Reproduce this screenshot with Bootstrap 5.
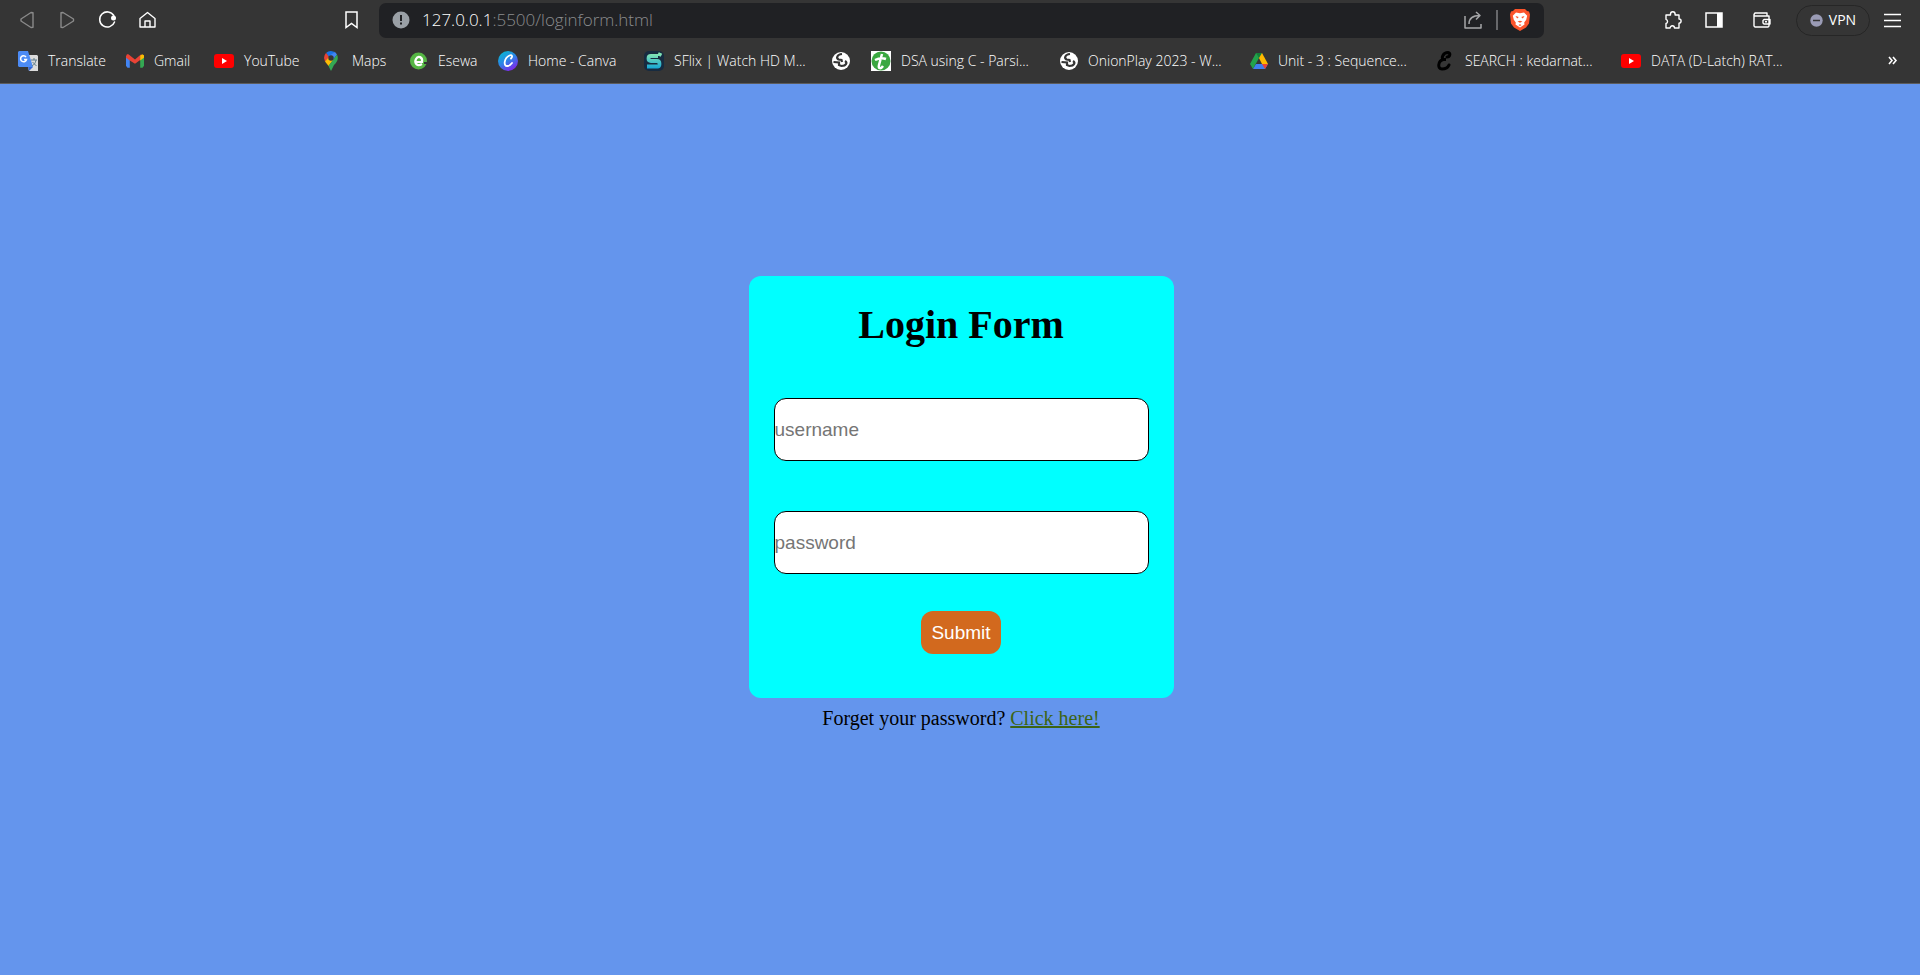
<!DOCTYPE html>
<html lang="en">
<head>
<meta charset="utf-8">
<meta name="viewport" content="width=device-width, initial-scale=1">
<title>Login Form</title>
<link href="https://cdn.jsdelivr.net/npm/bootstrap@5.3.0/dist/css/bootstrap.min.css" rel="stylesheet">
<style>
  body { background: #6495ed; color: #000; font-family: "Liberation Serif", "Times New Roman", serif; }
  .browser-bar { background: #353535; border-bottom: 1px solid #5c5c5c; color: #fff; padding-bottom: 1px; font-family: "Open Sans", sans-serif; font-weight: 300; }
  .browser-bar svg { display: block; flex: none; }
  .toolbar { height: 40px; padding-left: 18px; padding-right: 18px; }
  .tool-btn { border: 0; background: none; padding: 0; width: 20px; height: 20px; color: #fff; flex: none; }
  .nav-tools { gap: 20px; width: 361px; padding-right: 18px; }
  .url-box { height: 35px; background: #202124; border-radius: 7px; padding: 0 14px 0 13px; gap: 12px; }
  .url-field { font-size: 17px; line-height: 24px; color: #8b8c8e; }
  .url-field a { color: inherit; text-decoration: none; }
  .url-field span { color: #fff; }
  .url-rule { width: 2px; height: 20px; background: #67686b; }
  .side-tools { padding-left: 120px; gap: 20px; }
  .wallet-tools { gap: 24px; padding-left: 8px; }
  .vpn-tools { gap: 12px; }
  .vpn-btn { height: 31px; width: 74px; border: 1px solid #262626; border-radius: 16px; background: none; color: #fff; font-size: 14px; line-height: 20px; font-weight: 400; gap: 6px; padding: 0; }
  .bookmarks { height: 42px; padding: 0 18px; font-size: 14px; line-height: 20px; }
  .bookmark-list { display: grid; grid-template-columns: 108px 88px 110px 86px 88px 146px 188px 39px 189px 190px 187px 184px auto; align-items: center; }
  .bookmark-link { color: #fff; text-decoration: none; gap: 10px; white-space: nowrap; }
  .bookmark-link:hover { color: #fff; }
  .bookmark-icon { width: 20px; display: flex; justify-content: center; }
  .bookmark-icon-narrow { width: 18px; display: flex; }
  .login-area { padding-top: 192px; padding-left: 2px; }
  .login-panel { width: 425px; max-width: 100%; background: #0ff; border-radius: 12px; padding: 26px 25px 44px; }
  .login-title { font-size: 40px; line-height: 46px; font-weight: 700; margin-bottom: 50px; }
  .login-input, .login-input:focus { height: 63px; border: 1px solid #000; border-radius: 12px; padding: 0; background: #fff; color: #000; font-family: "Liberation Sans", Arial, sans-serif; font-size: 19px; line-height: 24px; }
  .login-input::placeholder { color: #757575; }
  .user-field { margin-bottom: 50px; }
  .submit-btn, .submit-btn:hover { background: #d2691e; color: #fff; border: 0; border-radius: 12px; margin-top: 37px; padding: 10px; font-family: "Liberation Sans", Arial, sans-serif; font-size: 19px; line-height: 23px; }
  .help-line { font-size: 20px; line-height: 24px; margin-top: 8px; }
  .help-line a { color: #3c6414; }
</style>
</head>
<body>
<header class="browser-bar">
  <div class="toolbar d-flex align-items-center">
    <div class="nav-tools d-flex align-items-center">
      <button class="tool-btn" aria-label="Back"><svg width="20" height="20" fill="none" stroke="#8a8a8a" stroke-width="1.4" stroke-linejoin="round"><path d="M15 2.800v14.400L13 17.500 3 11V9L13 2.500Z"/></svg></button>
      <button class="tool-btn" aria-label="Forward"><svg width="20" height="20" fill="none" stroke="#8a8a8a" stroke-width="1.4" stroke-linejoin="round"><path d="M3 2.800v14.400l2 .3L15.500 11V9L5 2.500Z"/></svg></button>
      <button class="tool-btn" aria-label="Reload"><svg width="20" height="20"><path d="M15.800 5.500A7.600 7.600 0 1 0 16.500 12" fill="none" stroke="#fff" stroke-width="1.500" stroke-linecap="round"/><circle cx="15.500" cy="8" r="2.500" fill="#fff"/></svg></button>
      <button class="tool-btn" aria-label="Home"><svg width="20" height="20" fill="none" stroke="#fff" stroke-width="1.400" stroke-linejoin="round"><path d="M2 8.500 9.500 2.500 17 8.500V17H2ZM7 17v-6h5v6"/></svg></button>
      <button class="tool-btn ms-auto" aria-label="Bookmark this page"><svg width="20" height="20" fill="none" stroke="#fff" stroke-width="1.500"><path d="M5 2h11v15.500L10.500 13.500 5 17.500Z"/></svg></button>
    </div>
    <div class="url-box d-flex align-items-center flex-grow-1">
      <svg width="18" height="18"><circle cx="9" cy="9" r="8.500" fill="#9aa0a6"/><path d="M9 4v6M9 11.500v2" stroke="#202124" stroke-width="2"/></svg>
      <div class="url-field flex-grow-1"><a href="#"><span>127.0.0.1</span>:5500/loginform.html</a></div>
      <button class="tool-btn" aria-label="Share"><svg width="20" height="20" fill="none" stroke="#a5a6a8" stroke-width="1.500" stroke-linejoin="round"><path d="M1 6v12h16v-4M5 14c0-5 3-8.500 11-8.500M12 2l4 3.500-4 4"/></svg></button>
      <div class="url-rule"></div>
      <button class="tool-btn d-flex align-items-center" aria-label="Shields"><svg width="20" height="22" viewBox="0 0 20 22"><path d="M5 0h10l2 2 2 .5 1 3-1 9-3 4-6 3.500-6-3.500-3-4-1-9 1-3L3 2Z" fill="#fb542b"/><path d="M6 3.500 10 4.200l4-.7 3.200 3.200-1 4-2 2.800.3 2-4.500 3-4.500-3 .3-2-2-2.800-1-4Z" fill="#fff"/><path d="m5.500 7 3.300 1-1.600 1.500ZM14.500 7l-3.300 1 1.600 1.500ZM7.500 12.500 10 11.700l2.500.8-2.500 1.300ZM8.500 16l1.500-.8 1.500.8-1.500 1Z" fill="#fb542b"/></svg></button>
    </div>
    <div class="side-tools d-flex align-items-center">
      <button class="tool-btn" aria-label="Extensions"><svg width="20" height="20" fill="none" stroke="#fff" stroke-width="1.400" stroke-linejoin="round"><path d="M2 5h4.500V4a2.300 2.300 0 0 1 4.600 0v1H15v4a2 2 0 0 1 0 4.200V18h-4.500a2.200 2.200 0 0 0-4.400 0H2v-4.500a2.200 2.200 0 0 0 0-4.200Z"/></svg></button>
      <button class="tool-btn" aria-label="Sidebar"><svg width="20" height="20"><path d="M2 3h16v14H2Z" fill="none" stroke="#fff" stroke-width="1.500"/><path d="M13 3h5v14h-5Z" fill="#fff"/></svg></button>
      <div class="wallet-tools d-flex align-items-center">
        <button class="tool-btn" aria-label="Wallet"><svg width="20" height="20" fill="none" stroke="#fff" stroke-width="1.400" stroke-linejoin="round"><path d="M15 6V3H3L2 4.500V16l1 1h13l1-1V6H2M18 9.500h-6l-1 1V13l1 1h6ZM13 11.800h2"/></svg></button>
        <div class="vpn-tools d-flex align-items-center">
          <button class="vpn-btn d-flex align-items-center justify-content-center"><svg width="13" height="13"><circle cx="6.500" cy="6.500" r="6.200" fill="#9a9bb5"/><path d="M3 6.500h7" stroke="#353535" stroke-width="1.500"/></svg>VPN</button>
          <button class="tool-btn" aria-label="Menu"><svg width="20" height="20"><path d="M2 4.500h17M2 10.500h17M2 16.500h17" stroke="#fff" stroke-width="1.400"/></svg></button>
        </div>
      </div>
    </div>
  </div>
  <nav class="bookmarks d-flex align-items-center justify-content-between" aria-label="Bookmarks">
    <div class="bookmark-list">
      <a class="bookmark-link d-flex align-items-center" href="#"><span class="bookmark-icon"><svg width="20" height="20"><path d="M7 4h12l1 1v15h-9Z" fill="#dcdcdc"/><path d="M1 0h9l5 16H1l-1-1V1Z" fill="#4c8bf5"/><path d="m10 16h5l-4 4Z" fill="#3367d6"/><path d="M8 6A3 3 0 1 0 8.500 8.500H6" fill="none" stroke="#fff" stroke-width="1.500"/><path d="M13 9h6M16 7v2M18 9c-.5 3-2 5-4 6M14.500 11l4 4" fill="none" stroke="#607d8b"/></svg></span>Translate</a>
      <a class="bookmark-link d-flex align-items-center" href="#"><span class="bookmark-icon-narrow"><svg width="18" height="14" viewBox="0 0 19 14"><path d="M0 2v10l1.500 2H4V5Z" fill="#4285f4"/><path d="M15 5v9h2.500L19 12V2Z" fill="#34a853"/><path d="m0 2 1-2h1.500L9.500 5.500 16 0 15 6 9.500 10 4 6.500 0 3.500Z" fill="#ea4335"/><path d="M15 1.500 17 0l2 1v2.500l-4 3Z" fill="#fbbc04"/></svg></span>Gmail</a>
      <a class="bookmark-link d-flex align-items-center" href="#"><span class="bookmark-icon"><svg width="20" height="14"><rect width="20" height="14" rx="3" fill="#f00"/><path d="m8 4 5 3-5 3Z" fill="#fff"/></svg></span>YouTube</a>
      <a class="bookmark-link d-flex align-items-center" href="#"><span class="bookmark-icon-narrow"><svg width="14" height="20"><path d="M7 0a7 7 0 0 0-5 2l4 5 5-6Z" fill="#1a73e8"/><path d="M2 2Q0 4 0 7l1 3.500L6 7Z" fill="#ea4335"/><path d="M1 10.500 4.500 15 10 8 5 6Z" fill="#fbbc04"/><path d="m11 1 2 2.500L9 9 5 5Z" fill="#4285f4"/><path d="M13 3.500C15 8 13 11 10 14L7 20 4.500 15Z" fill="#34a853"/><circle cx="7" cy="7" r="2.700" fill="#353535"/></svg></span>Maps</a>
      <a class="bookmark-link d-flex align-items-center" href="#"><span class="bookmark-icon-narrow"><svg width="18" height="20"><circle cx="8.500" cy="10" r="8.500" fill="#55b644"/><path d="M5 11h7c1-5-4-7-6-3s1 8 6 5" fill="none" stroke="#fff" stroke-width="2.200"/><path d="M14 11h4v2h-4Z" fill="#353535"/></svg></span>Esewa</a>
      <a class="bookmark-link d-flex align-items-center" href="#"><span class="bookmark-icon"><svg width="20" height="20"><defs><linearGradient id="canva" x2=".6" y2="1"><stop stop-color="#00c4cc"/><stop offset=".55" stop-color="#2c84e8"/><stop offset="1" stop-color="#7d2ae8"/></linearGradient></defs><circle cx="10" cy="10" r="10" fill="url(#canva)"/><path d="M13 7.500c2-2 1-4-1.500-3C6 7 5 15.500 9.500 15c2 0 3-1 4.500-3" fill="none" stroke="#fff" stroke-width="1.800" stroke-linecap="round"/></svg></span>Home - Canva</a>
      <a class="bookmark-link d-flex align-items-center" href="#"><span class="bookmark-icon"><svg width="20" height="20"><defs><linearGradient id="sflix" gradientUnits="userSpaceOnUse" x1="0" y1="2" x2="0" y2="18"><stop stop-color="#8be8b0"/><stop offset="1" stop-color="#11a5d8"/></linearGradient></defs><rect width="20" height="20" rx="5" fill="#172b40"/><path d="M14 5H7Q4.500 5 4.500 7.500T7 10h6q2.500 0 2.500 3T13 15.500H3M15 5l1.500-3" fill="none" stroke="url(#sflix)" stroke-width="3.800"/></svg></span>SFlix | Watch HD M...</a>
      <a class="bookmark-link d-flex align-items-center" href="#" aria-label="Website"><span class="bookmark-icon-narrow"><svg width="18" height="20"><circle cx="9" cy="10" r="9" fill="#fff"/><path d="M10 3C5 3.500 4 7 6.500 8.500l3 .5.500 2M1.500 11l5.500.5v2.500l2.500 1c5 0 6-3.500 3.500-5" fill="none" stroke="#353535" stroke-width="2.200"/></svg></span></a>
      <a class="bookmark-link d-flex align-items-center" href="#"><span class="bookmark-icon"><svg width="20" height="20"><path d="M0 0h20v20H0Z" fill="#fff"/><circle cx="10" cy="10" r="9.500" fill="#3aa840"/><path d="M11 3 8 14c-1 4 2 4 4 1M4 9q6-3 11-1" fill="none" stroke="#fff" stroke-width="2.500"/></svg></span>DSA using C - Parsi...</a>
      <a class="bookmark-link d-flex align-items-center" href="#"><span class="bookmark-icon-narrow"><svg width="18" height="20"><circle cx="9" cy="10" r="9" fill="#fff"/><path d="M10 3C5 3.500 4 7 6.500 8.500l3 .5.500 2M1.500 11l5.500.5v2.500l2.500 1c5 0 6-3.500 3.500-5" fill="none" stroke="#353535" stroke-width="2.200"/></svg></span>OnionPlay 2023 - W...</a>
      <a class="bookmark-link d-flex align-items-center" href="#"><span class="bookmark-icon-narrow"><svg width="18" height="16"><path d="M6 0h6L9 5 3 16 0 11Z" fill="#22a24b"/><path d="M6 0h6l-3 5Z" fill="#148038"/><path d="m12 0 6 11h-6L9 5Z" fill="#ffba00"/><path d="M6 11h12l-3 5H3Z" fill="#3f7fee"/><path d="M12 11h6l-3 5Z" fill="#ea4335"/></svg></span>Unit - 3 : Sequence...</a>
      <a class="bookmark-link d-flex align-items-center" href="#"><span class="bookmark-icon-narrow"><svg width="16" height="20"><path d="M10 6c3 0 4-4 1-4.500C6 1.500 4 7 6.500 8.500H9 6.500C1 9.500 0 18 5 18c4 0 6-1.500 7-4" fill="none" stroke="#000" stroke-width="3" stroke-linecap="round"/></svg></span>SEARCH : kedarnat...</a>
      <a class="bookmark-link d-flex align-items-center" href="#"><span class="bookmark-icon"><svg width="20" height="14"><rect width="20" height="14" rx="3" fill="#f00"/><path d="m8 4 5 3-5 3Z" fill="#fff"/></svg></span>DATA (D-Latch) RAT...</a>
    </div>
    <button class="tool-btn" aria-label="More bookmarks"><svg width="20" height="20" fill="none" stroke="#fff" stroke-width="1.600"><path d="m7 6 3 3.500L7 13M11 6l3 3.500-3 3.500"/></svg></button>
  </nav>
</header>
<main class="login-area d-flex flex-column align-items-center">
  <form class="login-panel text-center">
    <h1 class="login-title">Login Form</h1>
    <input class="login-input user-field form-control" id="username" type="text" placeholder="username" aria-label="username">
    <input class="login-input form-control" id="password" type="password" placeholder="password" aria-label="password">
    <button class="submit-btn btn" type="button">Submit</button>
  </form>
  <p class="help-line mb-0">Forget your password? <a href="#">Click here!</a></p>
</main>
<script src="https://cdn.jsdelivr.net/npm/bootstrap@5.3.0/dist/js/bootstrap.bundle.min.js"></script>
</body>
</html>
